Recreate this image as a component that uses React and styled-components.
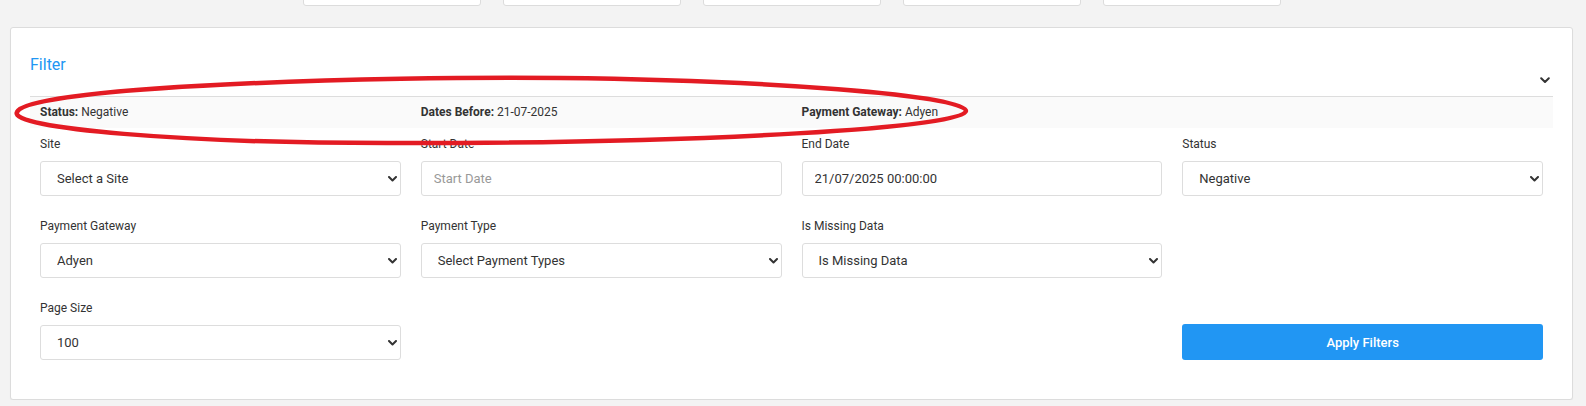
import React from "react";
import styled, { createGlobalStyle } from "styled-components";

const GlobalStyle = createGlobalStyle`
  html, body { margin: 0; padding: 0; }
  body {
    background: #f3f3f3;
    font-family: Roboto, "Liberation Sans", Arial, sans-serif;
    color: #333;
  }
  * { box-sizing: border-box; }
`;

const Page = styled.div`
  position: relative;
  width: 1563px;
  margin-left: 10px;
`;

const CardStrip = styled.div`
  display: flex;
  justify-content: center;
  align-items: flex-end;
  gap: 22px;
  height: 7px;
  overflow: hidden;
  margin-bottom: 20px;
`;

const StatCard = styled.div`
  flex: 0 0 178px;
  height: 60px;
  margin-bottom: 1px;
  background: #fff;
  border: 1px solid #dcdcdc;
  border-radius: 3px;
`;

const Panel = styled.section`
  background: #fff;
  border: 1px solid #dcdcdc;
  border-radius: 3px;
  box-shadow: 0 1px 1px rgba(0, 0, 0, 0.05);
  padding: 20px 19px 39px;
`;

const Header = styled.div`
  display: flex;
  justify-content: space-between;
  align-items: flex-end;
  height: 49px;
  border-bottom: 1px solid #dddddd;
`;

const Title = styled.h2`
  margin: 0;
  align-self: flex-start;
  font-size: 16px;
  font-weight: 400;
  line-height: 33px;
  color: #2196f3;
`;

const Toggle = styled.span`
  display: flex;
  margin: 0 3px 12px 0;
  color: #333;
`;

const SummaryStrip = styled.div`
  display: grid;
  grid-template-columns: repeat(4, 1fr);
  column-gap: 20px;
  padding: 8px 10px;
  background: #fafafa;
  font-size: 12px;
  line-height: 15px;
  color: #333;
`;

const SummaryItem = styled.div`
  white-space: nowrap;
  b { font-weight: 700; }
`;

const FormGrid = styled.div`
  display: grid;
  grid-template-columns: repeat(4, 1fr);
  column-gap: 20px;
  row-gap: 22px;
  padding: 8px 10px 0;
`;

const Field = styled.div`
  display: flex;
  flex-direction: column;
  grid-column: ${(p) => p.$col || "auto"};
`;

const Label = styled.label`
  font-size: 12px;
  line-height: 16px;
  color: #333;
  margin-bottom: 9px;
`;

const SelectWrap = styled.div`
  position: relative;
`;

const Select = styled.select`
  appearance: none;
  -webkit-appearance: none;
  width: 100%;
  height: 35px;
  padding: 0 24px 0 16px;
  border: 1px solid #dddddd;
  border-radius: 3px;
  background: #fff;
  font-family: Roboto, "Liberation Sans", Arial, sans-serif;
  font-size: 13px;
  color: #333;
  outline: none;
`;

const Caret = styled.svg`
  position: absolute;
  right: 4px;
  top: 50%;
  margin-top: -3px;
  pointer-events: none;
`;

const Input = styled.input`
  width: 100%;
  height: 35px;
  padding: 0 12px;
  border: 1px solid #dddddd;
  border-radius: 3px;
  background: #fff;
  font-family: Roboto, "Liberation Sans", Arial, sans-serif;
  font-size: 13px;
  color: #333;
  outline: none;
  &::placeholder { color: #999; }
`;

const ApplyButton = styled.button`
  grid-column: 4;
  align-self: end;
  height: 36px;
  border: none;
  border-radius: 3px;
  background: #2196f3;
  color: #fff;
  font-family: Roboto, "Liberation Sans", Arial, sans-serif;
  font-size: 13px;
  font-weight: 500;
  cursor: pointer;
`;

const Annotation = styled.svg`
  position: absolute;
  left: -10px;
  top: 0;
  pointer-events: none;
  overflow: visible;
`;

const SelectField = ({ label, value, col }) => (
  <Field $col={col}>
    <Label>{label}</Label>
    <SelectWrap>
      <Select defaultValue={value}>
        <option value={value}>{value}</option>
      </Select>
      <Caret width="9" height="6" viewBox="0 0 9 6">
        <polyline points="1,1 4.5,4.5 8,1" fill="none" stroke="#333" strokeWidth="2" strokeLinecap="round" strokeLinejoin="round" />
      </Caret>
    </SelectWrap>
  </Field>
);

const InputField = ({ label, value, placeholder }) => (
  <Field>
    <Label>{label}</Label>
    <Input readOnly value={value} placeholder={placeholder} />
  </Field>
);

export default function App() {
  return (
    <>
      <GlobalStyle />
      <Page>
        <CardStrip>
          {[0, 1, 2, 3, 4].map((i) => (
            <StatCard key={i} />
          ))}
        </CardStrip>
        <Panel>
          <Header>
            <Title>Filter</Title>
            <Toggle>
              <svg width="10" height="7" viewBox="0 0 10 7">
                <polyline points="1.2,1.2 5,5 8.8,1.2" fill="none" stroke="#333" strokeWidth="2" strokeLinecap="round" strokeLinejoin="round" />
              </svg>
            </Toggle>
          </Header>
          <SummaryStrip>
            <SummaryItem><b>Status:</b> Negative</SummaryItem>
            <SummaryItem><b>Dates Before:</b> 21-07-2025</SummaryItem>
            <SummaryItem><b>Payment Gateway:</b> Adyen</SummaryItem>
          </SummaryStrip>
          <FormGrid>
            <SelectField label="Site" value="Select a Site" />
            <InputField label="Start Date" value="" placeholder="Start Date" />
            <InputField label="End Date" value="21/07/2025 00:00:00" />
            <SelectField label="Status" value="Negative" />
            <SelectField label="Payment Gateway" value="Adyen" />
            <SelectField label="Payment Type" value="Select Payment Types" />
            <SelectField label="Is Missing Data" value="Is Missing Data" />
            <SelectField label="Page Size" value="100" col="1" />
            <ApplyButton type="button">Apply Filters</ApplyButton>
          </FormGrid>
        </Panel>
        <Annotation width="1000" height="160" viewBox="0 0 1000 160">
          <path
            d="M17,112 C28,86 380,76 560,78 C760,80 966,95 966,111 C966,128 700,143 410,143 C180,144 8,128 17,112 Z"
            fill="none"
            stroke="#e31b23"
            strokeWidth="4.5"
          />
        </Annotation>
      </Page>
    </>
  );
}
